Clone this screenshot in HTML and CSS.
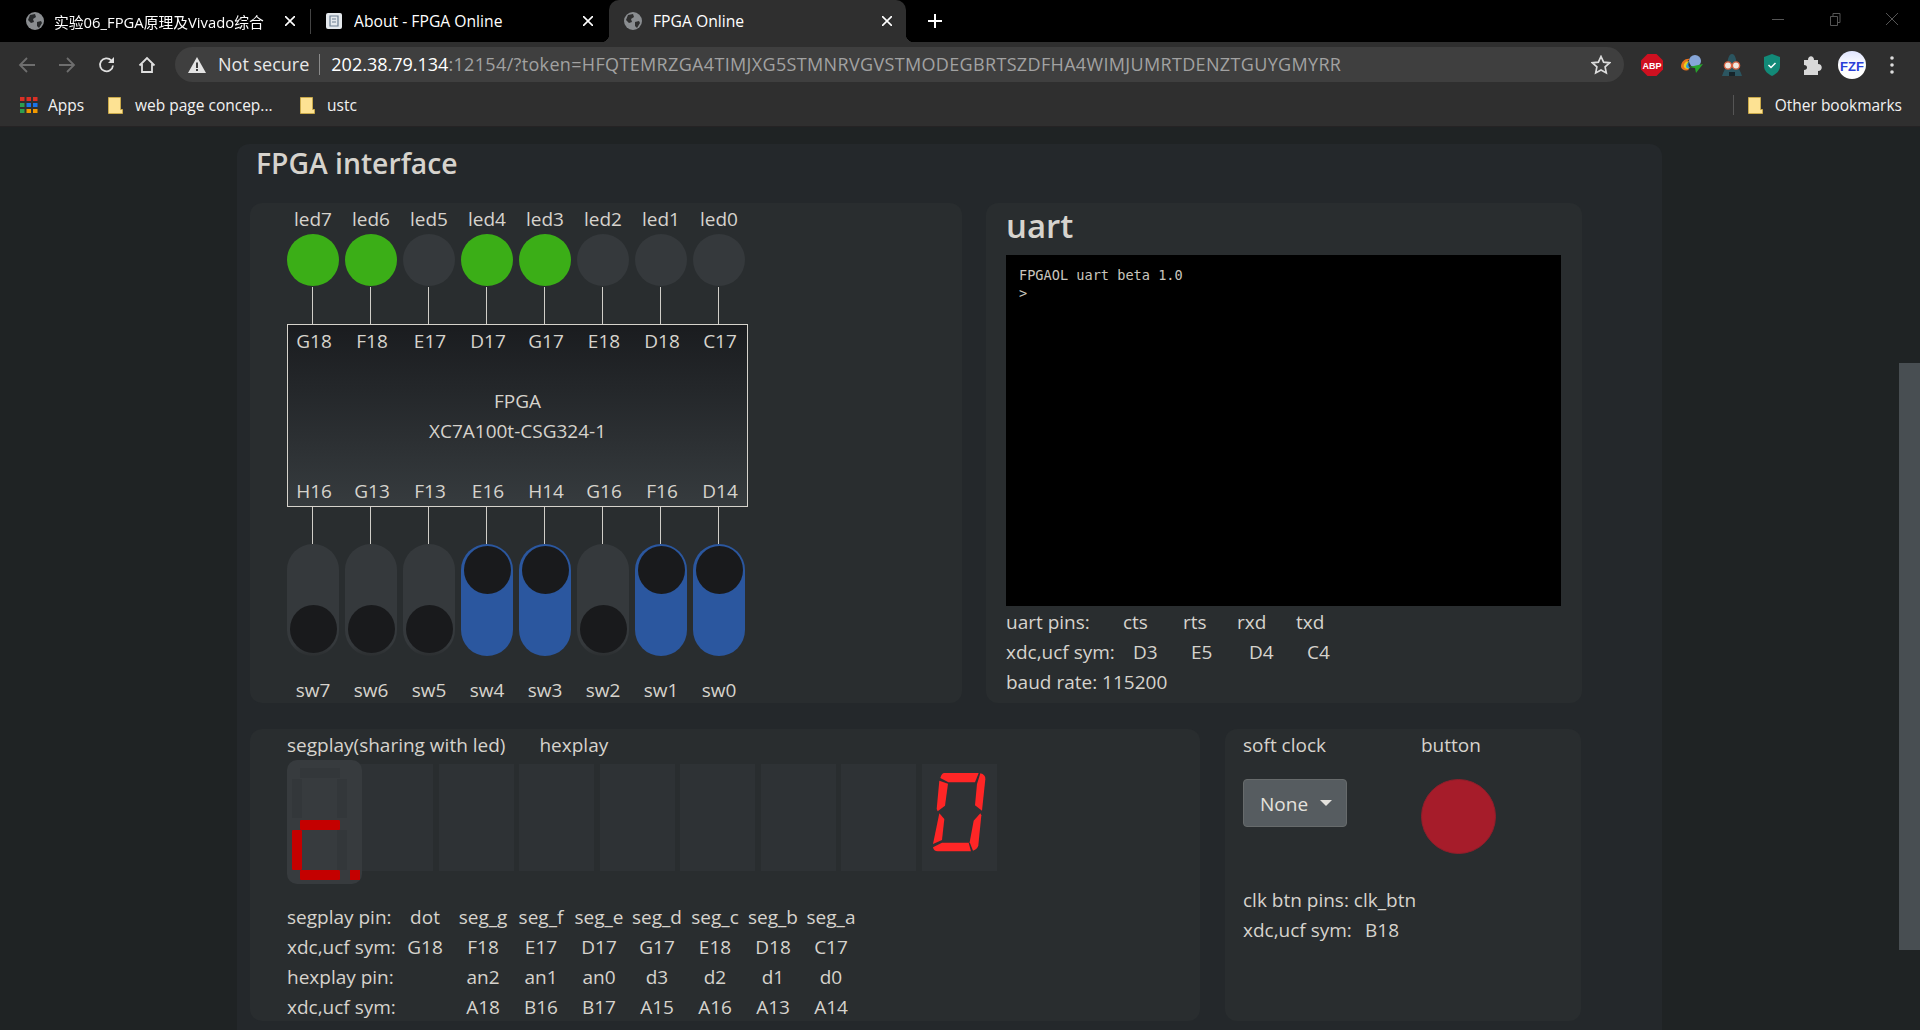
FILE: index.html
```html
<!doctype html>
<html lang="en">
<head>
    <meta charset="UTF-8">
    <title>FPGA Online</title>
    <link rel="stylesheet" href="styles.css">
</head>
<body>
    <!-- browser chrome -->
    <div class="tabbar">
        <div class="tab">
            <svg class="favicon" viewBox="0 0 18 18"><circle cx="9" cy="9" r="9" fill="#8a8d90"/><path d="M4 3l5-1 1 3-3 2 1 3-3 1-3-3zM11 10l4-1 1 2-3 5-2-2z" fill="#26282a"/></svg>
            <span class="tab-title tab-fade">实验06_FPGA原理及Vivado综合</span>
            <svg class="tab-close" viewBox="0 0 10 10"><path d="M0 0l10 10M10 0L0 10" stroke="#fff" stroke-width="1.6"/></svg>
        </div>
        <div class="tab tab-sep">
            <svg class="favicon" viewBox="0 0 18 18"><rect x="1" y="1" width="16" height="16" rx="2" fill="#e4e8ec"/><path d="M5 4h8v10H5zM7 7h4M7 10h4" fill="none" stroke="#6d7f92" stroke-width="1.2"/></svg>
            <span class="tab-title">About - FPGA Online</span>
            <svg class="tab-close" viewBox="0 0 10 10"><path d="M0 0l10 10M10 0L0 10" stroke="#fff" stroke-width="1.6"/></svg>
        </div>
        <div class="tab tab-active">
            <svg class="favicon" viewBox="0 0 18 18"><circle cx="9" cy="9" r="9" fill="#8a8d90"/><path d="M4 3l5-1 1 3-3 2 1 3-3 1-3-3zM11 10l4-1 1 2-3 5-2-2z" fill="#2f2f2f"/></svg>
            <span class="tab-title">FPGA Online</span>
            <svg class="tab-close" viewBox="0 0 10 10"><path d="M0 0l10 10M10 0L0 10" stroke="#fff" stroke-width="1.6"/></svg>
        </div>
        <svg class="new-tab" viewBox="0 0 14 14"><path d="M7 0v14M0 7h14" stroke="#fff" stroke-width="2"/></svg>
        <div class="win-controls">
            <svg viewBox="0 0 14 14"><path d="M1 7.500h12" stroke="#555" stroke-width="1"/></svg>
            <svg viewBox="0 0 14 14"><path d="M2.500 4.500h7v9h-7zM5 4.500V1.500h7v9H9.500" fill="none" stroke="#555" stroke-width="1"/></svg>
            <svg viewBox="0 0 14 14"><path d="M1 1l12 12M13 1L1 13" stroke="#555" stroke-width="1"/></svg>
        </div>
    </div>

    <div class="toolbar">
        <div class="nav-btn"><svg viewBox="0 0 18 18"><path d="M17 9H2M9 2L2 9l7 7" fill="none" stroke="#6e6e6e" stroke-width="1.800"/></svg></div>
        <div class="nav-btn"><svg viewBox="0 0 18 18"><path d="M1 9h15M9 2l7 7-7 7" fill="none" stroke="#6e6e6e" stroke-width="1.800"/></svg></div>
        <div class="nav-btn"><svg viewBox="0 0 18 18"><path d="M15 9.500A6.500 6.500 0 1 1 13.200 4.300" fill="none" stroke="#e0e0e0" stroke-width="1.800"/><path d="M16 1v6h-6z" fill="#e0e0e0"/></svg></div>
        <div class="nav-btn"><svg viewBox="0 0 18 18"><path d="M1.500 9.500L9 2l7.500 7.500M4 8v8h10V8" fill="none" stroke="#e0e0e0" stroke-width="1.800"/></svg></div>
        <div class="omnibox">
            <svg class="warn" viewBox="0 0 18 16"><path d="M9 0l9 16H0z" fill="#e4e4e4"/><path d="M8 5.500h2v5.500H8zM8 12h2v2H8z" fill="#3f3f3f"/></svg>
            <span class="not-secure">Not secure</span>
            <span class="omni-sep"></span>
            <span class="url"><span class="url-host">202.38.79.134</span>:12154/?token=HFQTEMRZGA4TIMJXG5STMNRVGVSTMODEGBRTSZDFHA4WIMJUMRTDENZTGUYGMYRR</span>
            <svg class="star" viewBox="0 0 20 20"><path d="M10 1.500l2.600 5.600 6 .7-4.500 4.100 1.200 6L10 15l-5.300 2.900 1.200-6L1.400 7.800l6-.7z" fill="none" stroke="#dcdcdc" stroke-width="1.700"/></svg>
        </div>
        <div class="ext"><svg viewBox="0 0 22 22"><path d="M6.500 0h9L22 6.500v9L15.500 22h-9L0 15.500v-9z" fill="#cf1020"/><text x="11" y="14.500" class="abp-text">ABP</text></svg></div>
        <div class="ext"><svg viewBox="0 0 22 22"><path d="M0 13C0 7 5 4 9 5 5 7 4 12 8 16 4 17 1 16 0 13z" fill="#e8731c"/><path d="M3 13c-1-3 2-6 5-6-2 2-2 5 0 8-2 0-4 0-5-2z" fill="#e8d020"/><path d="M5 13c0-2 1-4 3-5-1 2-1 4 1 6-2 1-3 0-4-1z" fill="#2f9fe0"/><circle cx="14" cy="7" r="6" fill="#86a6d8"/><path d="M22 10l-7 9-1-5-6-1z" fill="#27a52c"/></svg></div>
        <div class="ext"><svg viewBox="0 0 22 22"><path d="M11 0c3 0 4 5 5 9 1 5 4 9 5 13H1c1-4 4-8 5-13 1-4 2-9 5-9z" fill="#2b5560"/><circle cx="7" cy="11.500" r="3.600" fill="#f0e8e0" stroke="#d8603f" stroke-width="1.400"/><circle cx="15" cy="11.500" r="3.600" fill="#f0e8e0" stroke="#d8603f" stroke-width="1.400"/><path d="M8 18h6v4H8z" fill="#16242a"/></svg></div>
        <div class="ext"><svg viewBox="0 0 22 22"><path d="M11 0l8 3v9c0 5-4 8-8 10-4-2-8-5-8-10V3z" fill="#128a78"/><path d="M7.500 11l2.500 2.500 4.500-4.500" fill="none" stroke="#fff" stroke-width="1.500"/></svg></div>
        <div class="ext"><svg viewBox="0 0 22 22"><path d="M3 6h4c0-5 6-5 6 0h4v4c5 0 5 7 0 7v4H3v-5c4 0 4-5 0-5z" fill="#d8d8d8"/></svg></div>
        <div class="ext"><svg class="avatar" viewBox="0 0 28 28"><defs><linearGradient id="fzf" x1="0" y1="0" x2="0" y2="1"><stop offset="0" stop-color="#dfe4ff"/><stop offset=".55" stop-color="#fff"/></linearGradient></defs><circle cx="14" cy="14" r="14" fill="url(#fzf)"/><text x="14" y="19.500" class="fzf-text">FZF</text></svg></div>
        <div class="ext"><svg viewBox="0 0 22 22"><circle cx="11" cy="4" r="1.800" fill="#ddd"/><circle cx="11" cy="11" r="1.800" fill="#ddd"/><circle cx="11" cy="18" r="1.800" fill="#ddd"/></svg></div>
    </div>

    <div class="bookmarks">
        <svg class="apps" viewBox="0 0 18 16"><g fill="#d93025"><rect width="4.500" height="4"/><rect x="6.500" width="4.500" height="4"/><rect x="13" width="4.500" height="4"/></g><g fill="#1a73e8"><rect y="6" width="4.500" height="4" fill="#2e9e4f"/><rect x="6.500" y="6" width="4.500" height="4"/><rect x="13" y="6" width="4.500" height="4"/></g><g fill="#f29900"><rect y="12" width="4.500" height="4" fill="#2e9e4f"/><rect x="6.500" y="12" width="4.500" height="4"/><rect x="13" y="12" width="4.500" height="4"/></g></svg>
        <span class="bm-text bm-apps">Apps</span>
        <svg class="folder" viewBox="0 0 15 17"><path d="M.500.500h12v12h2v4H.500z" fill="#fde293" stroke="#c9a94a"/></svg>
        <span class="bm-text bm-web">web page concep...</span>
        <svg class="folder" viewBox="0 0 15 17"><path d="M.500.500h12v12h2v4H.500z" fill="#fde293" stroke="#c9a94a"/></svg>
        <span class="bm-text">ustc</span>
        <div class="bm-other">
            <span class="bm-sep"></span>
            <svg class="folder" viewBox="0 0 15 17"><path d="M.500.500h12v12h2v4H.500z" fill="#fde293" stroke="#c9a94a"/></svg>
            <span class="bm-text">Other bookmarks</span>
        </div>
    </div>

    <!-- page -->
    <div class="view">
        <div class="page">
            <div class="outer-card">
                <h3 class="main-title">FPGA interface</h3>

                <div class="card-row">
                    <div class="card board-card">
                        <div class="pin-grid label-row">
                            <span>led7</span><span>led6</span><span>led5</span><span>led4</span><span>led3</span><span>led2</span><span>led1</span><span>led0</span>
                        </div>
                        <div class="pin-grid">
                            <div class="led on"></div><div class="led on"></div><div class="led"></div><div class="led on"></div><div class="led on"></div><div class="led"></div><div class="led"></div><div class="led"></div>
                        </div>
                        <div class="pin-grid wires wires-top">
                            <i></i><i></i><i></i><i></i><i></i><i></i><i></i><i></i>
                        </div>
                        <div class="chip">
                            <div class="pin-grid label-row">
                                <span>G18</span><span>F18</span><span>E17</span><span>D17</span><span>G17</span><span>E18</span><span>D18</span><span>C17</span>
                            </div>
                            <div class="chip-name">FPGA<br>XC7A100t-CSG324-1</div>
                            <div class="pin-grid label-row">
                                <span>H16</span><span>G13</span><span>F13</span><span>E16</span><span>H14</span><span>G16</span><span>F16</span><span>D14</span>
                            </div>
                        </div>
                        <div class="pin-grid wires">
                            <i></i><i></i><i></i><i></i><i></i><i></i><i></i><i></i>
                        </div>
                        <div class="pin-grid">
                            <div class="toggle"><b></b></div><div class="toggle"><b></b></div><div class="toggle"><b></b></div><div class="toggle on"><b></b></div><div class="toggle on"><b></b></div><div class="toggle"><b></b></div><div class="toggle on"><b></b></div><div class="toggle on"><b></b></div>
                        </div>
                        <div class="pin-grid label-row sw-labels">
                            <span>sw7</span><span>sw6</span><span>sw5</span><span>sw4</span><span>sw3</span><span>sw2</span><span>sw1</span><span>sw0</span>
                        </div>
                    </div>

                    <div class="card uart-card">
                        <h3 class="uart-title">uart</h3>
                        <div class="terminal">FPGAOL uart beta 1.0<br>&gt;</div>
                        <div class="uart-row uart-head"><span>uart pins:</span><span>cts</span><span>rts</span><span>rxd</span><span>txd</span></div>
                        <div class="uart-row uart-sym"><span>xdc,ucf sym:</span><span>D3</span><span>E5</span><span>D4</span><span>C4</span></div>
                        <div>baud rate: 115200</div>
                    </div>
                </div>

                <div class="card-row row-two">
                    <div class="card seg-card">
                        <div class="seg-heads"><span>segplay(sharing with led)</span><span class="hex-head">hexplay</span></div>
                        <div class="digits">
                            <svg class="seg-digit" viewBox="0 0 75 124">
                                <g fill="#33373a">
                                    <rect x="13" y="8" width="40" height="10" rx="1"/>
                                    <rect x="5" y="19" width="10" height="39" rx="1"/>
                                    <rect x="50" y="19" width="10" height="39" rx="1"/>
                                    <rect x="50" y="70" width="10" height="40" rx="1"/>
                                </g>
                                <g fill="#c40000">
                                    <rect x="13" y="60" width="40" height="10" rx="1"/>
                                    <rect x="5" y="70" width="10" height="40" rx="1"/>
                                    <rect x="13" y="110" width="40" height="10" rx="1"/>
                                    <rect x="63" y="110" width="10" height="10"/>
                                </g>
                            </svg>
                            <div class="hex-digit first"></div>
                            <div class="hex-digit"></div>
                            <div class="hex-digit"></div>
                            <div class="hex-digit"></div>
                            <div class="hex-digit"></div>
                            <div class="hex-digit"></div>
                            <div class="hex-digit"></div>
                            <div class="hex-digit">
                                <svg viewBox="125 70 225 318">
                                    <g fill="#ff2626">
                                        <path d="M192 97h103l-11 28h-80l-24-13q4-15 12-15z"/>
                                        <path d="M177 120l26 9-9 66-22 17-3-7z"/>
                                        <path d="M300 98q16 4 15 18l-10 94-21-16 6-64z"/>
                                        <path d="M177 218l15 17-7 63-27 12z"/>
                                        <path d="M300 218l3 6-9 90q-2 12-16 16l-10-25 12-65z"/>
                                        <path d="M158 320l27-14h80l7 26H172q-12 0-14-12z"/>
                                    </g>
                                </svg>
                            </div>
                        </div>
                        <div class="seg-table">
                            <span class="seg-label">segplay pin:</span><span>dot</span><span>seg_g</span><span>seg_f</span><span>seg_e</span><span>seg_d</span><span>seg_c</span><span>seg_b</span><span>seg_a</span>
                            <span class="seg-label">xdc,ucf sym:</span><span>G18</span><span>F18</span><span>E17</span><span>D17</span><span>G17</span><span>E18</span><span>D18</span><span>C17</span>
                            <span class="seg-label">hexplay pin:</span><span></span><span>an2</span><span>an1</span><span>an0</span><span>d3</span><span>d2</span><span>d1</span><span>d0</span>
                            <span class="seg-label">xdc,ucf sym:</span><span></span><span>A18</span><span>B16</span><span>B17</span><span>A15</span><span>A16</span><span>A13</span><span>A14</span>
                        </div>
                    </div>

                    <div class="card clock-card">
                        <div class="clock-grid">
                            <span>soft clock</span><span>button</span>
                            <div><button class="clock-btn">None<i class="caret"></i></button></div>
                            <div class="red-btn"></div>
                        </div>
                        <div class="clock-notes">clk btn pins: clk_btn</div>
                        <div class="clock-sym"><span>xdc,ucf sym:</span><span>B18</span></div>
                    </div>
                </div>
            </div>
        </div>
        <div class="scrollbar"><div class="thumb"></div></div>
    </div>
</body>
</html>
```

FILE: styles.css
```css
html, body {
    margin: 0;
    height: 1030px;
    overflow: hidden;
}
body {
    display: flex;
    flex-direction: column;
    background: #1f2324;
    color: #d6d3cd;
    font-family: "Open Sans", "Noto Sans CJK SC", sans-serif;
}

/* tabs */
.tabbar {
    display: flex;
    align-items: stretch;
    height: 42px;
    padding-left: 10px;
    background: #000;
    color: #fff;
    font-size: 15.700px;
}
.tab {
    display: flex;
    align-items: center;
    width: 300px;
    box-sizing: border-box;
    padding: 0 15px 0 16px;
}
.tab-sep {
    width: 299px;
    position: relative;
    padding-left: 15px;
    padding-right: 16px;
}
.tab-sep::before {
    content: "";
    position: absolute;
    left: 0;
    top: 9px;
    bottom: 8px;
    width: 1px;
    background: #444;
}
.tab-active {
    position: relative;
    width: 297px;
    padding-left: 15px;
    padding-right: 14px;
    background: #2f2f2f;
    border-radius: 10px 10px 0 0;
}
.tab-active::before,
.tab-active::after {
    content: "";
    position: absolute;
    bottom: 0;
    width: 8px;
    height: 8px;
}
.tab-active::before {
    left: -8px;
    background: radial-gradient(circle at 0 0, #000 8px, #2f2f2f 8.500px);
}
.tab-active::after {
    right: -8px;
    background: radial-gradient(circle at 100% 0, #000 8px, #2f2f2f 8.500px);
}
.favicon {
    width: 18px;
    height: 18px;
    flex: none;
}
.tab-title {
    flex: 1;
    margin: 0 11px 0 11px;
    overflow: hidden;
    white-space: nowrap;
}
.tab-fade {
    margin-left: 10px;
    font-size: 14.800px;
    -webkit-mask-image: linear-gradient(to right, #000 95%, rgba(0, 0, 0, .4) 100%);
    mask-image: linear-gradient(to right, #000 95%, rgba(0, 0, 0, .4) 100%);
}
.tab-close {
    width: 10px;
    height: 10px;
    flex: none;
}
.new-tab {
    width: 14px;
    height: 14px;
    margin: 14px 0 0 22px;
}
.win-controls {
    display: flex;
    gap: 43px;
    margin-left: auto;
    padding: 12px 21px 0 0;
}
.win-controls svg {
    width: 14px;
    height: 14px;
}

/* toolbar */
.toolbar {
    display: flex;
    align-items: center;
    height: 42px;
    box-sizing: border-box;
    padding: 5px 8px 2px 7px;
    background: #2f2f2f;
}
.nav-btn {
    display: flex;
    justify-content: center;
    width: 40px;
    flex: none;
}
.nav-btn svg {
    width: 18px;
    height: 18px;
}
.omnibox {
    display: flex;
    align-items: center;
    width: 1449px;
    height: 35px;
    flex: none;
    box-sizing: border-box;
    margin: 0 8px;
    padding: 0 13px;
    border-radius: 18px;
    background: #3f3f3f;
    font-size: 18px;
    color: #a2a2a2;
    white-space: nowrap;
}
.warn {
    width: 18px;
    height: 16px;
    flex: none;
}
.not-secure {
    margin: 0 0 2px 12px;
    color: #e8e8e8;
}
.omni-sep {
    width: 1px;
    height: 21px;
    margin: 0 11px 0 10px;
    background: #8a8a8a;
}
.url {
    margin-bottom: 2px;
    letter-spacing: .34px;
}
.url-host {
    color: #fff;
    letter-spacing: 0;
}
.star {
    width: 20px;
    height: 20px;
    margin-left: auto;
}
.ext {
    display: flex;
    justify-content: center;
    width: 40px;
    flex: none;
}
.ext svg {
    width: 22px;
    height: 22px;
}
.ext .avatar {
    width: 28px;
    height: 28px;
}
.abp-text {
    fill: #fff;
    font: bold 9px "Liberation Sans", sans-serif;
    text-anchor: middle;
}
.fzf-text {
    fill: #2a3fd8;
    font: bold 13px "Liberation Sans", sans-serif;
    text-anchor: middle;
}

/* bookmarks */
.bookmarks {
    display: flex;
    align-items: center;
    height: 43px;
    box-sizing: border-box;
    padding: 0 18px 0 20px;
    background: #2f2f2f;
    border-bottom: 1px solid #252324;
    font-size: 15.500px;
    color: #f2f2f2;
}
.apps {
    width: 18px;
    height: 16px;
    flex: none;
}
.folder {
    width: 15px;
    height: 17px;
    flex: none;
    margin-right: 12px;
}
.bm-apps {
    width: 60px;
    margin-left: 10px;
}
.bm-web {
    width: 165px;
}
.bm-text {
    white-space: nowrap;
}
.bm-other {
    display: flex;
    align-items: center;
    margin-left: auto;
}
.bm-sep {
    width: 1px;
    height: 20px;
    margin-right: 14px;
    background: #555;
}

/* page */
.view {
    display: flex;
    flex: 1;
    min-height: 0;
}
.page {
    flex: 1;
    padding: 17px 0 0 237px;
    font-size: 19px;
    line-height: 30px;
    overflow: hidden;
}
.scrollbar {
    width: 21px;
    padding-top: 236px;
}
.thumb {
    height: 587px;
    background: #484e52;
}
.outer-card {
    width: 1425px;
    height: 1000px;
    box-sizing: border-box;
    padding: 0 13px;
    border-radius: 12px;
    background: #24282b;
}
.main-title {
    margin: 0;
    height: 59px;
    padding-left: 6px;
    font-size: 28.300px;
    font-weight: 600;
    line-height: 38px;
}
.card-row {
    display: flex;
    gap: 24px;
}
.row-two {
    margin-top: 26px;
    gap: 25px;
}
.card {
    box-sizing: border-box;
    border-radius: 12px;
    background: #292d2f;
}

/* board */
.board-card {
    width: 712px;
    height: 500px;
    padding: 1px 0 0 37px;
}
.pin-grid {
    display: grid;
    grid-template-columns: repeat(8, 58px);
}
.label-row span {
    width: 52px;
    text-align: center;
    white-space: nowrap;
}
.led {
    width: 52px;
    height: 52px;
    border-radius: 50%;
    background: #35393c;
}
.led.on {
    background: #3bae17;
}
.wires i {
    display: block;
    width: 1px;
    height: 37px;
    margin-left: 25px;
    background: #d0cec8;
}
.wires-top i {
    margin-top: 1px;
}
.chip {
    display: flex;
    flex-direction: column;
    justify-content: space-between;
    width: 461px;
    height: 183px;
    box-sizing: border-box;
    padding: 1px 0 0;
    border: 1px solid #d6d3cc;
    background: linear-gradient(#1a1c1f, #363b3e);
}
.chip-name {
    text-align: center;
}
.toggle {
    display: flex;
    flex-direction: column;
    justify-content: flex-end;
    align-items: center;
    width: 52px;
    height: 112px;
    box-sizing: border-box;
    padding: 2px 0 3px;
    border-radius: 26px;
    background: linear-gradient(#35393c 90%, #2c2f31);
}
.toggle b {
    display: block;
    width: 47px;
    height: 48px;
    border-radius: 50%;
    background: #191a1c;
}
.toggle.on {
    justify-content: flex-start;
    background: #2b579f;
}
.sw-labels {
    margin-top: 19px;
}

/* uart */
.uart-card {
    width: 596px;
    height: 500px;
    padding-left: 20px;
}
.uart-title {
    margin: 0;
    height: 52px;
    font-size: 33px;
    font-weight: 600;
    line-height: 46px;
}
.terminal {
    width: 555px;
    height: 351px;
    box-sizing: border-box;
    margin-bottom: 1px;
    padding: 11px 13px;
    background: #000;
    color: #c9c5bd;
    font: 13.600px/18px "DejaVu Sans Mono", monospace;
}
.uart-row {
    display: grid;
    grid-template-columns: 117px 60px 54px 59px 58px;
}
.uart-sym {
    grid-template-columns: 127px repeat(4, 58px);
}

/* seven segment */
.seg-card {
    width: 950px;
    height: 292px;
    padding: 1px 0 0 37px;
}
.seg-heads {
    display: flex;
}
.hex-head {
    margin-left: 34px;
}
.digits {
    display: flex;
    align-items: flex-start;
    gap: 5.500px;
}
.seg-digit {
    position: relative;
    z-index: 1;
    width: 75px;
    height: 124px;
    flex: none;
    border-radius: 10px;
    background: #373b3e;
}
.hex-digit {
    width: 75px;
    height: 107px;
    flex: none;
    margin-top: 4px;
    background: #2e3235;
}
.hex-digit.first {
    margin-left: -9.500px;
}
.hex-digit svg {
    display: block;
    width: 75px;
    height: 106px;
}
.seg-table {
    display: grid;
    grid-template-columns: 109px repeat(8, 58px);
    margin-top: 18px;
    text-align: center;
}
.seg-label {
    text-align: left;
    white-space: nowrap;
}

/* clock */
.clock-card {
    width: 356px;
    height: 292px;
    padding: 1px 0 0 18px;
}
.clock-grid {
    display: grid;
    grid-template-columns: 178px auto;
    grid-template-rows: 30px 75px;
    row-gap: 19px;
    margin-bottom: 31px;
}
.clock-btn {
    display: flex;
    align-items: center;
    width: 104px;
    height: 48px;
    box-sizing: border-box;
    padding: 2px 0 0 16px;
    border: 1px solid #676b6c;
    border-radius: 4px;
    background: #565c60;
    color: #e4e2dd;
    font: inherit;
}
.caret {
    width: 0;
    height: 0;
    margin: -3px 0 0 12px;
    border-top: 6px solid #e4e2dd;
    border-left: 6px solid transparent;
    border-right: 6px solid transparent;
}
.red-btn {
    width: 75px;
    height: 75px;
    box-sizing: border-box;
    border: 1px solid #8f1e2a;
    border-radius: 50%;
    background: #a61c2a;
}
.clock-sym {
    display: flex;
}
.clock-sym span:first-child {
    width: 122px;
}
```
